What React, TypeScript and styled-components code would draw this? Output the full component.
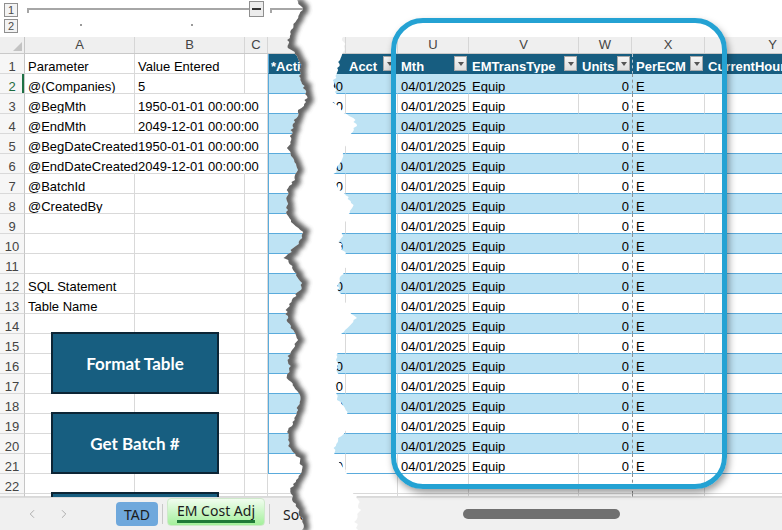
import styled, { createGlobalStyle } from "styled-components";
import { ChevronLeft, ChevronRight } from "lucide-react";

const HEAD = "#175d80";
const BAND = "#bee3f4";
const ROWLINE = "#5aabdc";
const GRID = "#d9d9d9";

const LEFT_COLS = "25px 110px 110px 23px 42px";
const RIGHT_COLS = "36px 52px 71px 110px 53px 73px 136px";
const ROWS = Array.from({ length: 22 }, (_, i) => i + 1);

const PARAMS: Record<number, [string, string]> = {
  1: ["Parameter", "Value Entered"],
  2: ["@(Companies)", "5"],
  3: ["@BegMth", "1950-01-01 00:00:00"],
  4: ["@EndMth", "2049-12-01 00:00:00"],
  5: ["@BegDateCreated", "1950-01-01 00:00:00"],
  6: ["@EndDateCreated", "2049-12-01 00:00:00"],
  7: ["@BatchId", ""],
  8: ["@CreatedBy", ""],
  12: ["SQL Statement", ""],
  13: ["Table Name", ""],
};

const AMOUNT_ROWS = [2, 3, 6, 7, 10, 12, 14, 16, 17, 18, 19, 21];

const GlobalStyle = createGlobalStyle`
  html, body { margin: 0; padding: 0; background: #fff; }
  body {
    font-family: "Liberation Sans", Arial, sans-serif;
    font-size: 13px;
    color: #000;
  }
  * { box-sizing: border-box; }
`;

const Page = styled.div`
  position: relative;
  width: 782px;
  height: 530px;
  overflow: hidden;
  background: #fff;
`;

const Sheet = styled.div`
  display: flex;
  height: 497px;
  overflow: hidden;
`;

const Pane = styled.div<{ $width?: number }>`
  position: relative;
  display: flex;
  flex-direction: column;
  flex: ${(p) => (p.$width ? `0 0 ${p.$width}px` : "1 1 auto")};
  min-width: 0;
  overflow: hidden;
`;

/* outline (grouping) strip */
const OutlineArea = styled.div`
  display: flex;
  flex: 0 0 37px;
  padding: 3px 0 0 4px;
`;

const LevelStack = styled.div`
  display: flex;
  flex-direction: column;
  gap: 2px;
`;

const LevelButton = styled.div`
  width: 14px;
  height: 14px;
  border: 1px solid #8f8f8f;
  background: #f3f3f3;
  color: #4a4a4a;
  font-size: 11px;
  line-height: 12px;
  text-align: center;
`;

const Track = styled.div`
  display: flex;
  flex-direction: column;
  margin-left: 9px;
`;

const TrackRow = styled.div`
  display: flex;
  align-items: flex-start;
  height: 16px;
`;

const Bracket = styled.div<{ $w: number; $gap?: number }>`
  width: ${(p) => p.$w}px;
  height: 5px;
  margin: 5px 0 0 ${(p) => p.$gap ?? 0}px;
  border-top: 2px solid #a6a6a6;
  border-left: 2px solid #a6a6a6;
`;

const CollapseBox = styled.div`
  display: flex;
  align-items: center;
  justify-content: center;
  width: 15px;
  height: 16px;
  margin-top: -2px;
  border: 1px solid #8f8f8f;
  background: #ececec;
  &::after {
    content: "";
    width: 9px;
    height: 2px;
    background: #333;
  }
`;

const DotRow = styled.div`
  display: flex;
  margin-top: 5px;
`;

const Dot = styled.span<{ $gap: number }>`
  width: 2px;
  height: 2px;
  margin-left: ${(p) => p.$gap}px;
  background: #9a9a9a;
`;

/* column letters */
const LetterRow = styled.div<{ $cols: string }>`
  display: grid;
  grid-template-columns: ${(p) => p.$cols};
  flex: 0 0 16px;
  background: #efefef;
  border-bottom: 1px solid #c9c9c9;
`;

const Letter = styled.div`
  border-right: 1px solid #d6d6d6;
  color: #444;
  line-height: 16px;
  text-align: center;
`;

const Corner = styled.div`
  position: relative;
  border-right: 1px solid #c6c6c6;
  &::after {
    content: "";
    position: absolute;
    right: 2px;
    bottom: 2px;
    border-left: 9px solid transparent;
    border-bottom: 9px solid #c3c3c3;
  }
`;

/* grid rows and cells */
const GridRow = styled.div<{ $cols: string }>`
  display: grid;
  grid-template-columns: ${(p) => p.$cols};
  flex: 0 0 20px;
`;

const Filler = styled.div<{ $cols: string }>`
  display: grid;
  grid-template-columns: ${(p) => p.$cols};
  flex: 1 1 auto;
`;

const RowHead = styled.div<{ $active?: boolean }>`
  display: flex;
  align-items: flex-end;
  justify-content: center;
  line-height: 13px;
  background: #f6f6f6;
  color: ${(p) => (p.$active ? "#1d6b3f" : "#444")};
  border-right: 1px solid #c6c6c6;
  border-bottom: 1px solid ${GRID};
  box-shadow: ${(p) => (p.$active ? "inset -2px 0 0 #1e7145" : "none")};
`;

type Tone = "plain" | "band" | "light" | "head";

const toneBg: Record<Tone, string> = {
  plain: "transparent",
  band: BAND,
  light: "#ffffff",
  head: HEAD,
};

const Cell = styled.div<{
  $tone?: Tone;
  $right?: boolean;
  $spill?: boolean;
  $break?: boolean;
  $edge?: boolean;
  $open?: boolean;
}>`
  display: flex;
  align-items: flex-end;
  justify-content: ${(p) => (p.$right ? "flex-end" : "flex-start")};
  min-width: 0;
  padding: 0 ${(p) => (p.$right ? 2 : 3)}px 0 ${(p) => (p.$edge ? 2 : 3)}px;
  line-height: 13px;
  white-space: nowrap;
  overflow: ${(p) => (p.$spill ? "visible" : "hidden")};
  background: ${(p) => toneBg[p.$tone ?? "plain"]};
  color: ${(p) => (p.$tone === "head" ? "#fff" : "#000")};
  font-weight: ${(p) => (p.$tone === "head" ? 700 : 400)};
  border-bottom: 1px solid
    ${(p) =>
      p.$tone === "band" || p.$tone === "light"
        ? ROWLINE
        : p.$tone === "head"
        ? HEAD
        : GRID};
  border-right: 1px solid
    ${(p) =>
      p.$open || p.$spill || p.$tone === "band" || p.$tone === "head"
        ? "transparent"
        : GRID};
  border-left: ${(p) =>
    p.$break
      ? `1px dashed ${p.$tone === "head" ? "#b9c9d3" : "#8d8d8d"}`
      : p.$edge
      ? `1px solid ${ROWLINE}`
      : "none"};
`;

const FilterButton = styled.span`
  flex: 0 0 13px;
  height: 15px;
  align-self: center;
  display: flex;
  align-items: center;
  justify-content: center;
  margin: 0 -2px 0 auto;
  background: linear-gradient(#f6f6f6, #dedede);
  border: 1px solid #a9a9a9;
  &::after {
    content: "";
    border-left: 3.5px solid transparent;
    border-right: 3.5px solid transparent;
    border-top: 4px solid #555;
  }
`;

const MacroButton = styled.div<{ $top: number }>`
  position: absolute;
  left: 51px;
  top: ${(p) => p.$top}px;
  width: 168px;
  height: 62px;
  display: flex;
  align-items: center;
  justify-content: center;
  background: #175e80;
  border: 2px solid #0c2535;
  color: #fff;
  font-family: Lato, "Open Sans", sans-serif;
  font-weight: 700;
  font-size: 17px;
`;

/* sheet tabs */
const TabBar = styled.div`
  display: flex;
  align-items: center;
  height: 33px;
  background: #f0f0f0;
  border-top: 1px solid #dcdcdc;
  font-family: "Noto Sans", sans-serif;
  font-size: 14px;
  color: #1b1b1b;
`;

const NavArrows = styled.div`
  display: flex;
  gap: 18px;
  flex: 0 0 116px;
  padding-left: 25px;
  color: #a3a3a3;
`;

const Tab = styled.div<{ $active?: boolean }>`
  display: flex;
  align-items: center;
  justify-content: center;
  height: ${(p) => (p.$active ? 28 : 24)}px;
  padding: 0 ${(p) => (p.$active ? 9 : 8)}px;
  border-radius: 4px;
  align-self: ${(p) => (p.$active ? "flex-start" : "center")};
  margin-top: ${(p) => (p.$active ? 0 : 0)}px;
  background: ${(p) =>
    p.$active ? "linear-gradient(#f1fdef, #a3f09b)" : "#6fa8dc"};
  border: ${(p) => (p.$active ? "1px solid #cfe9cb" : "none")};
`;

const TabLabel = styled.span`
  display: inline-block;
  line-height: 19px;
  border-bottom: 3px solid #1f7a38;
`;

const TabDivider = styled.span`
  width: 1px;
  height: 20px;
  margin: 0 4px;
  background: #c8c8c8;
`;

const PlainTab = styled.span`
  flex: 0 0 auto;
  width: 108px;
  padding-left: 9px;
  overflow: hidden;
  white-space: nowrap;
`;

const ScrollThumb = styled.div`
  width: 157px;
  height: 10px;
  margin-left: 81px;
  border-radius: 5px;
  background: #707070;
`;

/* overlays */
const TearLayer = styled.svg`
  position: absolute;
  left: 270px;
  top: 0;
  pointer-events: none;
`;

const Callout = styled.div`
  position: absolute;
  left: 391px;
  top: 18px;
  width: 336px;
  height: 471px;
  border: 5px solid #24a2d3;
  border-radius: 32px;
  box-shadow: 2px 4px 7px rgba(0, 0, 0, 0.38);
  pointer-events: none;
`;

const LEFT_EDGE: [number, number][] = [
  [27, 0], [32, 8], [29, 16], [25, 24], [20, 32], [18, 40], [19, 48], [28, 56],
  [32, 64], [30, 72], [31, 80], [34, 88], [37, 96], [34, 104], [28, 112],
  [25, 120], [22, 130], [20, 140], [18, 150], [24, 160], [27, 170], [24, 180],
  [18, 190], [17, 200], [17, 212], [21, 222], [33, 232], [31, 240], [22, 250],
  [15, 258], [22, 266], [26, 275], [32, 283], [30, 290], [22, 300], [16, 310],
  [17, 320], [22, 330], [27, 340], [24, 348], [18, 356], [20, 366], [17, 376],
  [22, 385], [29, 392], [30, 400], [27, 410], [24, 420], [19, 430], [17, 440],
  [21, 450], [29, 458], [32, 466], [30, 474], [25, 482], [20, 490], [22, 498],
  [26, 506], [30, 514], [33, 522], [32, 530],
];

const RIGHT_EDGE: [number, number][] = [
  [70, 0], [75, 30], [73, 40], [76, 50], [70, 60], [68, 72], [63, 82], [66, 92],
  [64, 102], [72, 112], [84, 118], [86, 126], [80, 134], [77, 142], [74, 150],
  [72, 158], [68, 166], [64, 176], [66, 186], [76, 195], [82, 205], [80, 213],
  [75, 222], [73, 232], [70, 242], [74, 252], [82, 262], [76, 268], [70, 278],
  [68, 290], [74, 300], [80, 312], [86, 318], [78, 326], [70, 335], [68, 345],
  [66, 358], [68, 368], [67, 380], [65, 390], [68, 400], [76, 410], [80, 420],
  [75, 430], [68, 440], [64, 450], [66, 460], [75, 470], [78, 480], [82, 490],
  [88, 500], [90, 510], [85, 520], [88, 530],
];

const jitter = (y: number, seed: number) => {
  const n = Math.sin((y + seed) * 12.9898) * 43758.5453;
  return (n - Math.floor(n) - 0.5) * 3.2;
};

const roughen = (pts: [number, number][], seed: number) => {
  const out: [number, number][] = [];
  for (let i = 0; i < pts.length - 1; i++) {
    const [x0, y0] = pts[i];
    const [x1, y1] = pts[i + 1];
    for (let y = y0; y < y1; y += 2) {
      const t = (y - y0) / (y1 - y0);
      out.push([x0 + (x1 - x0) * t + jitter(y, seed), y]);
    }
  }
  out.push(pts[pts.length - 1]);
  return out;
};

const Tear = () => {
  const left = roughen(LEFT_EDGE, 3);
  const right = roughen(RIGHT_EDGE, 11);
  const toPts = (p: [number, number][]) =>
    p.map(([x, y]) => `${x.toFixed(1)},${y}`).join(" ");
  const gap = `${toPts(left)} ${toPts([...right].reverse())}`;
  return (
    <TearLayer width="120" height="530" viewBox="0 0 120 530">
      <defs>
        <clipPath id="tear-gap">
          <polygon points={gap} />
        </clipPath>
        <filter id="tear-blur" x="-50%" y="-5%" width="200%" height="110%">
          <feGaussianBlur stdDeviation="2" />
        </filter>
      </defs>
      <polygon points={gap} fill="#fff" />
      <g clipPath="url(#tear-gap)">
        <polyline
          points={toPts(left)}
          fill="none"
          stroke="#4a4a4a"
          strokeWidth="11"
          opacity="0.85"
          filter="url(#tear-blur)"
        />
      </g>
    </TearLayer>
  );
};

const LeftPane = () => (
  <Pane $width={310}>
    <OutlineArea>
      <LevelStack>
        <LevelButton>1</LevelButton>
        <LevelButton>2</LevelButton>
      </LevelStack>
      <Track>
        <TrackRow>
          <Bracket $w={222} />
          <CollapseBox />
          <Bracket $w={60} $gap={6} />
        </TrackRow>
        <DotRow>
          <Dot $gap={53} />
          <Dot $gap={109} />
        </DotRow>
      </Track>
    </OutlineArea>

    <LetterRow $cols={LEFT_COLS}>
      <Corner />
      <Letter>A</Letter>
      <Letter>B</Letter>
      <Letter>C</Letter>
      <Letter />
    </LetterRow>

    {ROWS.map((r) => {
      const [param, value] = PARAMS[r] ?? ["", ""];
      const inTable = r >= 2 && r <= 21;
      const tone: Tone =
        r === 1 ? "head" : inTable ? (r % 2 === 0 ? "band" : "light") : "plain";
      return (
        <GridRow key={r} $cols={LEFT_COLS}>
          <RowHead $active={r === 2}>{r}</RowHead>
          <Cell $spill={param.length > 14}>{param}</Cell>
          <Cell $spill={value.length > 14}>{value}</Cell>
          <Cell />
          <Cell $tone={tone} $edge={r <= 21}>
            {r === 1 ? "*ActiveYN" : ""}
          </Cell>
        </GridRow>
      );
    })}
    <Filler $cols={LEFT_COLS}>
      <RowHead />
      <Cell />
      <Cell />
      <Cell />
      <Cell />
    </Filler>

    <MacroButton $top={332}>Format Table</MacroButton>
    <MacroButton $top={412}>Get Batch #</MacroButton>
    <MacroButton $top={492} />
  </Pane>
);

const HEADERS: [string, boolean][] = [
  ["", false],
  ["Acct", true],
  ["Mth", true],
  ["EMTransType", true],
  ["Units", true],
  ["PerECM", true],
  ["CurrentHours", false],
];

const RightPane = () => (
  <Pane>
    <OutlineArea />
    <LetterRow $cols={RIGHT_COLS}>
      <Letter />
      <Letter />
      <Letter>U</Letter>
      <Letter>V</Letter>
      <Letter>W</Letter>
      <Letter>X</Letter>
      <Letter>Y</Letter>
    </LetterRow>

    {ROWS.map((r) => {
      if (r === 1) {
        return (
          <GridRow key={r} $cols={RIGHT_COLS}>
            {HEADERS.map(([label, filter], i) => (
              <Cell key={i} $tone="head" $break={i === 5}>
                {label}
                {filter && <FilterButton />}
              </Cell>
            ))}
          </GridRow>
        );
      }
      const inTable = r <= 21;
      const tone: Tone = !inTable ? "plain" : r % 2 === 0 ? "band" : "light";
      return (
        <GridRow key={r} $cols={RIGHT_COLS}>
          <Cell $tone={tone} $right>
            {inTable && AMOUNT_ROWS.includes(r) ? "0.00" : ""}
          </Cell>
          <Cell $tone={tone} />
          <Cell $tone={tone}>{inTable ? "04/01/2025" : ""}</Cell>
          <Cell $tone={tone}>{inTable ? "Equip" : ""}</Cell>
          <Cell $tone={tone} $right $open>
            {inTable ? "0" : ""}
          </Cell>
          <Cell $tone={tone} $break>
            {inTable ? "E" : ""}
          </Cell>
          <Cell $tone={tone} />
        </GridRow>
      );
    })}
    <Filler $cols={RIGHT_COLS}>
      <Cell />
      <Cell />
      <Cell />
      <Cell />
      <Cell $open />
      <Cell $break />
      <Cell />
    </Filler>
  </Pane>
);

export default function App() {
  return (
    <>
      <GlobalStyle />
      <Page>
        <Sheet>
          <LeftPane />
          <RightPane />
        </Sheet>
        <TabBar>
          <NavArrows>
            <ChevronLeft size={14} strokeWidth={1.5} />
            <ChevronRight size={14} strokeWidth={1.5} />
          </NavArrows>
          <Tab>TAD</Tab>
          <TabDivider />
          <Tab $active>
            <TabLabel>EM Cost Adj</TabLabel>
          </Tab>
          <TabDivider />
          <PlainTab>Sources</PlainTab>
          <ScrollThumb />
        </TabBar>
        <Tear />
        <Callout />
      </Page>
    </>
  );
}
